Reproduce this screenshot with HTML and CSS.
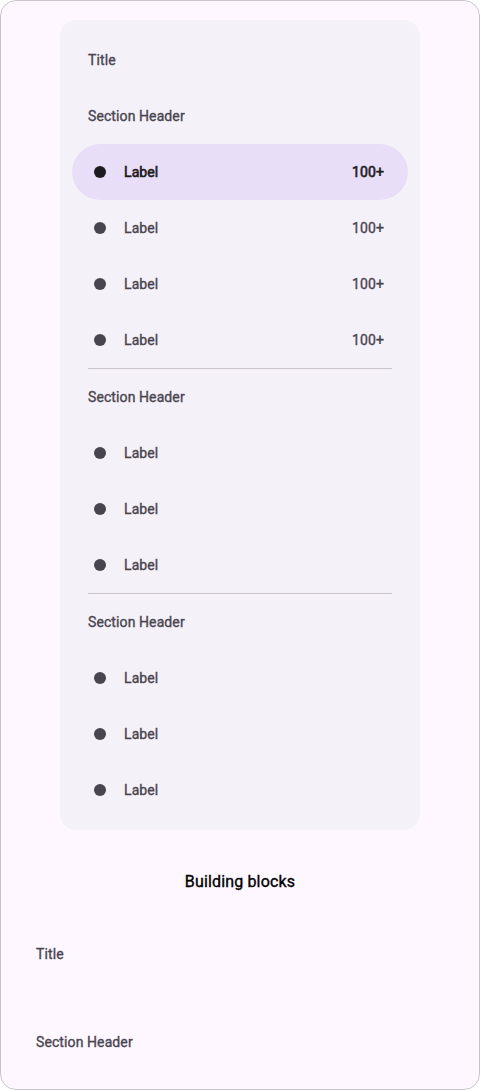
FILE: index.html
```html
<!DOCTYPE html>
<html>
<head>
<meta charset="utf-8">
<link rel="stylesheet" href="styles.css">
</head>
<body>
<div class="frame">
  <nav class="drawer">
    <div class="title">Title</div>
    <div class="header">Section Header</div>
    <div class="item active"><span class="dot"></span><span class="label">Label</span><span class="badge">100+</span></div>
    <div class="item"><span class="dot"></span><span class="label">Label</span><span class="badge">100+</span></div>
    <div class="item"><span class="dot"></span><span class="label">Label</span><span class="badge">100+</span></div>
    <div class="item"><span class="dot"></span><span class="label">Label</span><span class="badge">100+</span></div>
    <div class="divider"></div>
    <div class="header">Section Header</div>
    <div class="item"><span class="dot"></span><span class="label">Label</span></div>
    <div class="item"><span class="dot"></span><span class="label">Label</span></div>
    <div class="item"><span class="dot"></span><span class="label">Label</span></div>
    <div class="divider"></div>
    <div class="header">Section Header</div>
    <div class="item"><span class="dot"></span><span class="label">Label</span></div>
    <div class="item"><span class="dot"></span><span class="label">Label</span></div>
    <div class="item"><span class="dot"></span><span class="label">Label</span></div>
  </nav>
  <h2 class="blocks">Building blocks</h2>
  <div class="block-title">Title</div>
  <div class="block-header">Section Header</div>
</div>
</body>
</html>
```

FILE: styles.css
```css
* { box-sizing: border-box; }
html, body { margin: 0; padding: 0; background: #ffffff; }
body { font-family: Roboto, "Noto Sans", sans-serif; }
.frame {
  width: 480px;
  height: 1090px;
  border: 1px solid #cac4d0;
  border-radius: 16px;
  background: #fef7ff;
  padding-top: 19px;
  display: flex;
  flex-direction: column;
  align-items: center;
  overflow: hidden;
}
.drawer {
  width: 360px;
  background: #f5f1f8;
  border-radius: 16px;
  padding: 12px;
  display: flex;
  flex-direction: column;
}
.title, .header {
  height: 56px;
  display: flex;
  align-items: center;
  padding-left: 16px;
  font-size: 14px;
  font-weight: 400;
  -webkit-text-stroke: 0.35px currentColor;
  color: #49454f;
  letter-spacing: 0.1px;
}
.item {
  height: 56px;
  display: flex;
  align-items: center;
  padding: 0 24px 0 16px;
  border-radius: 28px;
  color: #49454f;
  font-size: 14px;
  font-weight: 400;
  -webkit-text-stroke: 0.35px currentColor;
  letter-spacing: 0.1px;
}
.item.active {
  background: #e8def8;
  color: #1d1b20;
  -webkit-text-stroke: 0.6px currentColor;
}
.dot {
  width: 24px;
  height: 24px;
  display: flex;
  align-items: center;
  justify-content: center;
  margin-right: 12px;
}
.dot::before {
  content: "";
  width: 12px;
  height: 12px;
  border-radius: 50%;
  background: #49454f;
}
.item.active .dot::before { background: #1d1b20; }
.label { flex: 1; }
.badge { font-size: 14px; }
.divider {
  height: 1px;
  background: #cac4d0;
  margin: 0 16px;
}
.blocks {
  margin: 42px 0 0;
  font-size: 16px;
  font-weight: 400;
  -webkit-text-stroke: 0.35px currentColor;
  color: #000;
  line-height: 20px;
  letter-spacing: 0.15px;
}
.block-title, .block-header {
  align-self: stretch;
  padding-left: 35px;
  font-size: 14px;
  font-weight: 400;
  -webkit-text-stroke: 0.35px currentColor;
  color: #49454f;
  line-height: 20px;
  letter-spacing: 0.1px;
}
.block-title { margin-top: 52px; }
.block-header { margin-top: 68px; }
```
